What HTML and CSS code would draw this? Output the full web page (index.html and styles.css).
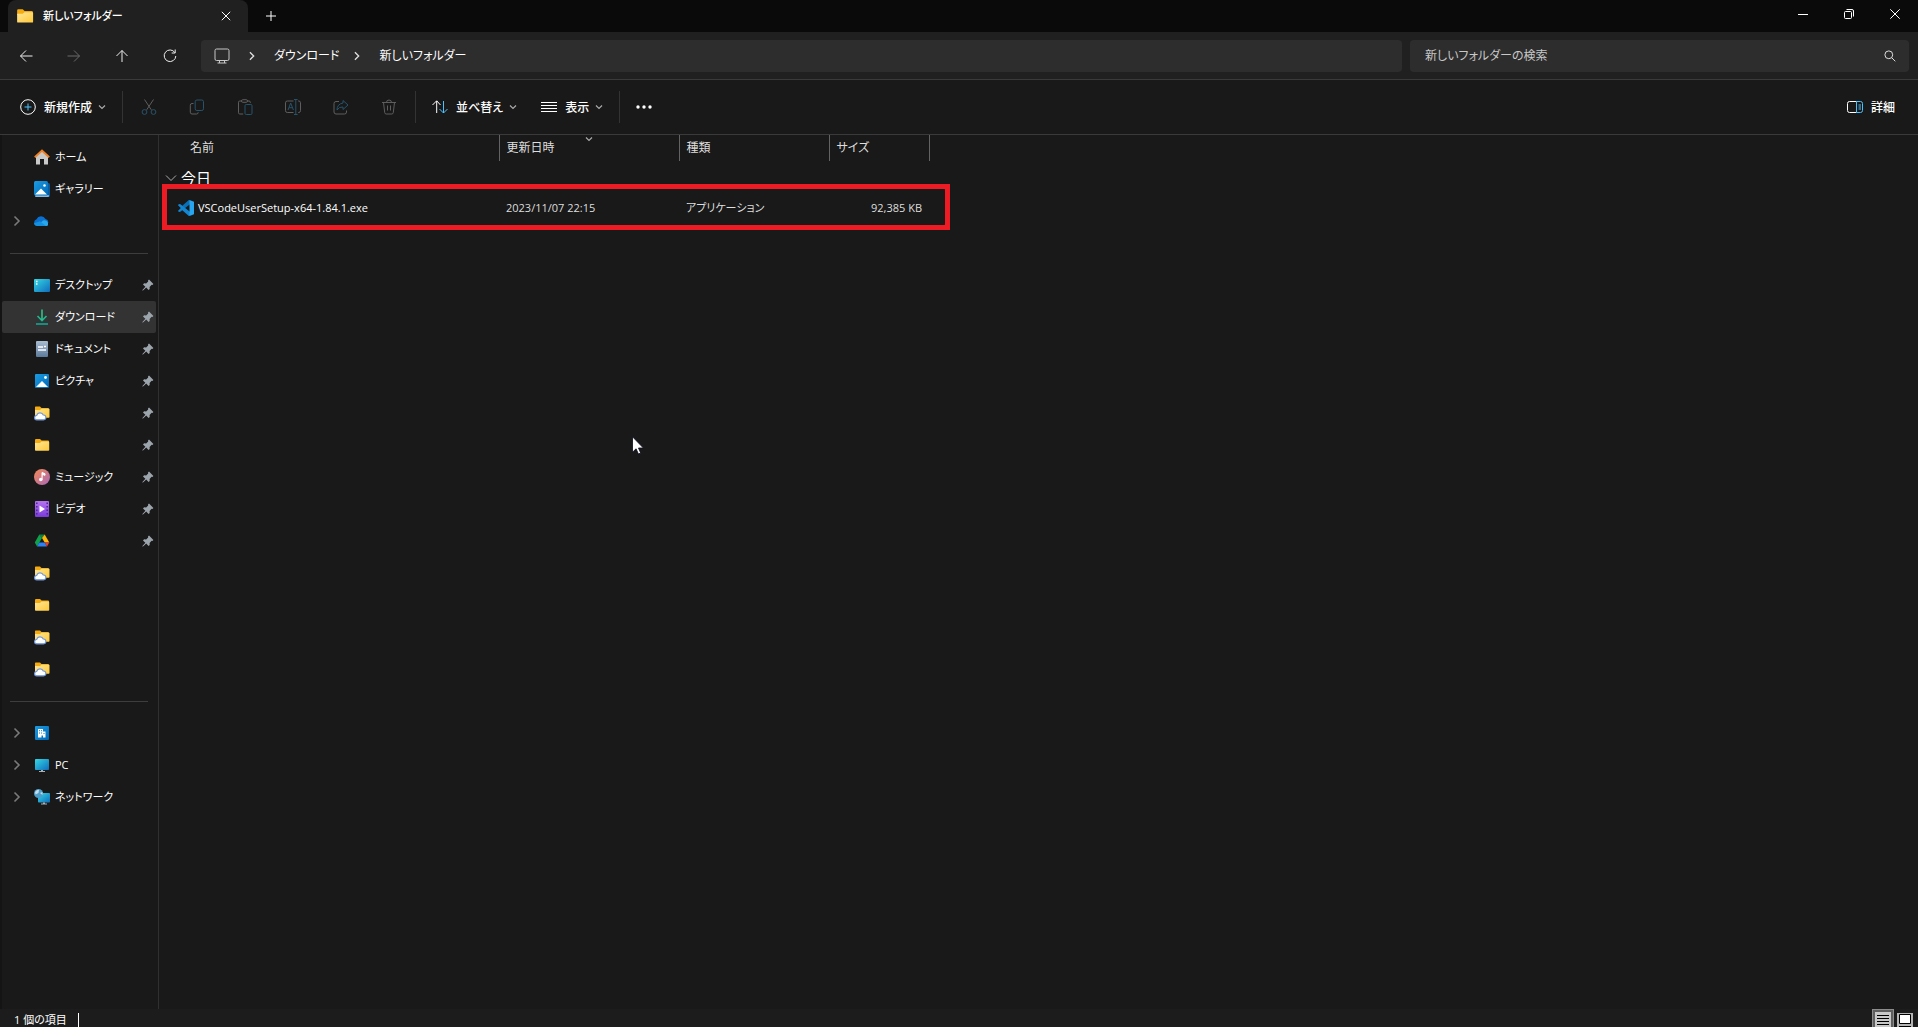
FILE: index.html
```html
<!DOCTYPE html>
<html lang="ja">
<head>
<meta charset="utf-8">
<meta name="viewport" content="width=device-width, initial-scale=1">
<title>新しいフォルダー</title>
<link rel="stylesheet" href="styles.css">
</head>
<body>
<svg class="defs" aria-hidden="true">
  <defs>
    <linearGradient id="g-folder" x1="0" y1="0" x2="1" y2="1"><stop offset="0" stop-color="#ffe69a"/><stop offset="1" stop-color="#ffc937"/></linearGradient>
    <linearGradient id="g-screen" x1="0" y1="0" x2="1" y2="1"><stop offset="0" stop-color="#34d8e4"/><stop offset="1" stop-color="#0f6cbd"/></linearGradient>
    <linearGradient id="g-blue" x1="0" y1="0" x2="1" y2="1"><stop offset="0" stop-color="#1b9de2"/><stop offset="1" stop-color="#0067b8"/></linearGradient>
    <linearGradient id="g-music" x1="0" y1="0" x2="1" y2="1"><stop offset="0" stop-color="#f58a55"/><stop offset="1" stop-color="#a868b8"/></linearGradient>
    <linearGradient id="g-video" x1="0" y1="0" x2="0" y2="1"><stop offset="0" stop-color="#b673f0"/><stop offset="1" stop-color="#7a3bdc"/></linearGradient>
    <linearGradient id="g-doc" x1="0" y1="0" x2="0" y2="1"><stop offset="0" stop-color="#a9bccf"/><stop offset="1" stop-color="#5d7b9b"/></linearGradient>
  </defs>
  <symbol id="i-folder" viewBox="0 0 16 16"><path d="M1 3.200q0-1.200 1-1.200h4l1.600 1.600H14q1 0 1 1V7H1z" fill="#f5ab10"/><path d="M1 6h5l1.600-1.400H14.500q.7 0 .7.7V13q0 .8-.8.8H1.800Q1 13.800 1 13z" fill="url(#g-folder)"/></symbol>
  <symbol id="i-cloudfolder" viewBox="0 0 16 16"><path d="M1 2.200q0-.7.7-.7H6L7.500 3H14q1 0 1 1v3H1z" fill="#f5ab10"/><path d="M1 5h5l1.500-1.300H15q.5 0 .5.6V12q0 .7-.7.7H1z" fill="url(#g-folder)"/><path d="M2.900 14.800a2.200 2.200 0 0 1-.2-4.400 3.500 3.500 0 0 1 6.600-.4 2.400 2.400 0 0 1 .3 4.800z" fill="#fff" stroke="#7399de" stroke-width="1.200"/></symbol>
  <symbol id="i-chev" viewBox="0 0 8 8"><path d="M1 2.500l3 3 3-3" fill="none" stroke="currentColor" stroke-width="1.200"/></symbol>
  <symbol id="i-next" viewBox="0 0 8 12"><path d="M1.500 1.500L6 6l-4.500 4.500" fill="none" stroke="currentColor" stroke-width="1.600"/></symbol>
  <symbol id="i-pin" viewBox="0 0 12 12"><path d="M7 .6l4.400 4.400-1 1-.8-.2-2 2.100.1 2-1.100 1.100-2.400-2.400L1 11.600H.4V11l3-3.200L1 5.400l1.100-1.100 2 .1 2.100-2L6 1.600z" fill="#9da5ac"/></symbol>
</svg>

<header class="titlebar">
  <div class="tab">
    <svg class="tab-folder"><use href="#i-folder"/></svg>
    <span class="tab-title">新しいフォルダー</span>
    <button class="tab-close" aria-label="タブを閉じる"><svg class="glyph" viewBox="0 0 10 10"><path d="M.8.8l8.400 8.400M9.200.8L.8 9.200"/></svg></button>
  </div>
  <button class="tab-new" aria-label="新しいタブ"><svg class="glyph" viewBox="0 0 10 10"><path d="M5 0v10M0 5h10"/></svg></button>
  <div class="window-controls">
    <button aria-label="最小化"><svg class="glyph" viewBox="0 0 10 10"><path d="M0 5.500h10"/></svg></button>
    <button aria-label="元に戻す"><svg class="glyph" viewBox="0 0 10 10"><rect x=".5" y="2.500" width="7" height="7" rx="1"/><path d="M2.500.5H8q1.500 0 1.500 1.500v5.500"/></svg></button>
    <button aria-label="閉じる"><svg class="glyph" viewBox="0 0 10 10"><path d="M.3.3l9.400 9.400M9.700.3L.3 9.700"/></svg></button>
  </div>
</header>

<div class="navbar">
  <button class="nav-btn" aria-label="戻る"><svg class="icon line" viewBox="0 0 16 16"><path d="M14.500 8H2.500M8 2.500L2.500 8 8 13.500"/></svg></button>
  <button class="nav-btn dim" aria-label="進む"><svg class="icon line" viewBox="0 0 16 16"><path d="M1.500 8h12M8 2.500L13.500 8 8 13.500"/></svg></button>
  <button class="nav-btn" aria-label="上へ"><svg class="icon line" viewBox="0 0 16 16"><path d="M8 14V2.500M2.500 8L8 2.500 13.500 8"/></svg></button>
  <button class="nav-btn" aria-label="最新の情報に更新"><svg class="icon line" viewBox="0 0 16 16"><path d="M12.800 4.500A5.800 5.800 0 1 0 13.800 8M13.200 1.500v3.500H9.700"/></svg></button>
  <nav class="address" aria-label="アドレス">
    <svg class="icon line" viewBox="0 0 16 16"><rect x="1" y="1" width="14" height="11.500" rx="1.500"/><path d="M5.500 12.500v2.500M10.500 12.500v2.500M3.500 15h9"/></svg>
    <svg class="next"><use href="#i-next"/></svg>
    <a class="crumb" href="#">ダウンロード</a>
    <svg class="next"><use href="#i-next"/></svg>
    <a class="crumb" href="#">新しいフォルダー</a>
  </nav>
  <label class="search">
    <input type="search" placeholder="新しいフォルダーの検索" aria-label="新しいフォルダーの検索">
    <svg class="glass" viewBox="0 0 12 12"><circle cx="4.800" cy="4.800" r="3.900"/><path d="M7.700 7.700l3.600 3.600"/></svg>
  </label>
</div>

<div class="toolbar" role="toolbar">
  <button class="tool"><svg class="icon line" viewBox="0 0 16 16"><circle cx="8" cy="8" r="7.300"/><path class="accent" d="M8 4.500v7M4.500 8h7"/></svg><span>新規作成</span><svg class="chev"><use href="#i-chev"/></svg></button>
  <span class="sep"></span>
  <button class="tool-icon" aria-label="切り取り"><svg class="icon line" viewBox="0 0 16 16"><path d="M3.500.5l6.800 10.300M12.500.5L5.700 10.800"/><g class="accent"><circle cx="3.500" cy="13" r="2.400"/><circle cx="12.500" cy="13" r="2.400"/></g></svg></button>
  <button class="tool-icon" aria-label="コピー"><svg class="icon line" viewBox="0 0 16 16"><path d="M4.500 4.500H3q-1.700 0-1.700 1.700v7Q1.300 15 3 15h4.500q1.700 0 1.700-1.700"/><rect class="accent" x="6.200" y="1" width="8.300" height="10.500" rx="1.700"/></svg></button>
  <button class="tool-icon" aria-label="貼り付け"><svg class="icon line" viewBox="0 0 16 16"><path d="M5 2H2.800Q1.500 2 1.500 3.200v10.600Q1.500 15 2.800 15h3.400M10 2h2q1.300 0 1.300 1.200v.8"/><rect x="4.500" y=".7" width="6" height="2.600" rx="1.300"/><rect class="accent" x="8" y="5.500" width="7" height="10" rx="1.200"/></svg></button>
  <button class="tool-icon" aria-label="名前の変更"><svg class="icon line" viewBox="0 0 16 16"><path d="M8.500 2H2.300Q.5 2 .5 3.800v7.900q0 1.800 1.800 1.800h6.200M13 2h.7q1.800 0 1.800 1.800v7.900q0 1.800-1.800 1.800H13"/><path class="accent" d="M10.800.7v14.500M9 .5h3.600M9 15.500h3.600M3 11l2.700-7 2.700 7M4 8.700h3.500"/></svg></button>
  <button class="tool-icon" aria-label="共有"><svg class="icon line" viewBox="0 0 16 16"><path d="M6 2.500H3Q1 2.500 1 4.500V13q0 2 2 2h8.500q2 0 2-2v-1.500"/><path class="accent" d="M10 1.500L15 6l-5 4.500V8Q6 7.500 4 11q0-6 6-7z"/></svg></button>
  <button class="tool-icon" aria-label="削除"><svg class="icon line" viewBox="0 0 16 16"><path d="M1 3.500h14M5.500 3.500Q5.500 1 8 1t2.500 2.500M2.500 3.500l1.200 10q.2 1.500 1.500 1.500h5.600q1.300 0 1.500-1.500l1.200-10M6.500 6.500v5M9.500 6.500v5"/></svg></button>
  <span class="sep"></span>
  <button class="tool"><svg class="icon line" viewBox="0 0 16 16"><path d="M4.700 14V2M.5 6l4.200-4.200L8.500 6"/><path class="accent" d="M11.500 2v12M7.500 10l4 4 4-4"/></svg><span>並べ替え</span><svg class="chev"><use href="#i-chev"/></svg></button>
  <button class="tool tool-view"><svg class="icon line" viewBox="0 0 16 16"><path d="M0 3.500h16M0 6.500h16M0 9.500h16M0 12.500h16"/></svg><span>表示</span><svg class="chev"><use href="#i-chev"/></svg></button>
  <span class="sep"></span>
  <button class="tool-icon more" aria-label="もっと見る"><svg class="icon" viewBox="0 0 16 16"><g fill="#fff"><circle cx="2" cy="8" r="1.700"/><circle cx="8" cy="8" r="1.700"/><circle cx="14" cy="8" r="1.700"/></g></svg></button>
  <button class="tool details"><svg class="icon line" viewBox="0 0 16 16"><path d="M9.500 2.500h-7Q.5 2.500.5 4.500v7q0 2 2 2h7"/><path class="accent" d="M9.500 2.500h4q2 0 2 2v7q0 2-2 2h-4zM11.500 6h2.500M11.500 8h2.500M11.500 10h2.500"/></svg><span>詳細</span></button>
</div>

<div class="body">
  <nav class="sidebar" aria-label="ナビゲーション">
    <ul>
      <li><a href="#"><span></span><svg class="icon" viewBox="0 0 16 16"><path d="M2 7l6-5.500L14 7v8.500h-4V10H6v5.500H2z" fill="#c9c9c9"/><path d="M.8 8.200L8 1.500l7.200 6.700" fill="none" stroke="#f08022" stroke-width="2"/></svg><span>ホーム</span></a></li>
      <li><a href="#"><span></span><svg class="icon" viewBox="0 0 16 16"><rect x="2" y="2" width="14" height="14" rx="1.500" fill="#0a5a9c"/><rect x="1" y="14" width="14" height="2" rx="1" fill="#8db9dc"/><rect width="14" height="14.500" rx="1.500" fill="url(#g-blue)"/><path d="M1 13.500l6-6 6 6z" fill="#fff"/><circle cx="10.500" cy="4.500" r="1.300" fill="#fff"/></svg><span>ギャラリー</span></a></li>
      <li><a href="#" aria-label="OneDrive"><svg class="next"><use href="#i-next"/></svg><svg class="icon" viewBox="0 0 16 16"><path d="M3.500 13A3.500 3.500 0 0 1 2.500 6.200 5 5 0 0 1 11.500 6a3.500 3.500 0 0 1 2.700 4z" fill="#0a6fce"/><path d="M3 13l6-5.500q3-1 5 2v2q0 1.500-1.500 1.500z" fill="#28a8ea"/><path d="M3.300 13Q.5 13 0 10.300l6-2 6 4.700z" fill="#1490df"/></svg></a></li>
      <li class="rule" role="separator"></li>
      <li><a href="#"><span></span><svg class="icon" viewBox="0 0 16 16"><rect y="2" width="16" height="13" rx="1" fill="url(#g-screen)"/><path d="M2 4.500h1.500M2 7h1.500" stroke="#fff" stroke-width="1.500"/></svg><span>デスクトップ</span><svg class="pin"><use href="#i-pin"/></svg></a></li>
      <li><a href="#" class="current" aria-current="page"><span></span><svg class="icon" viewBox="0 0 16 16"><path d="M3.500 7L8 11.500 12.500 7" fill="none" stroke="#1eb890" stroke-width="1.600"/><path d="M2 14.200h12v1.600H2z" fill="#12a594"/><path d="M7.200.5h1.600V11H7.200z" fill="#2fc389"/></svg><span>ダウンロード</span><svg class="pin"><use href="#i-pin"/></svg></a></li>
      <li><a href="#"><span></span><svg class="icon" viewBox="0 0 16 16"><rect x="2" width="12" height="16" rx="1" fill="url(#g-doc)"/><path d="M4 6h5M10 5.500h2M4 9h8" stroke="#fff" stroke-width="1.400"/></svg><span>ドキュメント</span><svg class="pin"><use href="#i-pin"/></svg></a></li>
      <li><a href="#"><span></span><svg class="icon" viewBox="0 0 16 16"><rect x="1" y="1" width="14" height="14" rx="1" fill="url(#g-blue)"/><path d="M2 14l6-6 6 6z" fill="#fff"/><circle cx="11.500" cy="4.500" r="1.400" fill="#fff"/></svg><span>ピクチャ</span><svg class="pin"><use href="#i-pin"/></svg></a></li>
      <li><a href="#" aria-label="クラウド フォルダー"><span></span><svg class="icon"><use href="#i-cloudfolder"/></svg><span></span><svg class="pin"><use href="#i-pin"/></svg></a></li>
      <li><a href="#" aria-label="フォルダー"><span></span><svg class="icon"><use href="#i-folder"/></svg><span></span><svg class="pin"><use href="#i-pin"/></svg></a></li>
      <li><a href="#"><span></span><svg class="icon" viewBox="0 0 16 16"><circle cx="8" cy="8" r="8" fill="url(#g-music)"/><circle cx="6.800" cy="10.500" r="1.800" fill="#fff"/><path d="M8 10.500V3.500l3 1.200v1.600L8.600 5.500" fill="#fff" stroke="#fff"/></svg><span>ミュージック</span><svg class="pin"><use href="#i-pin"/></svg></a></li>
      <li><a href="#"><span></span><svg class="icon" viewBox="0 0 16 16"><rect x="1" width="14" height="16" rx="1" fill="url(#g-video)"/><path d="M2.800 1.500v14M13.200 1.500v14" stroke="#4d2494" stroke-width="1.500" stroke-dasharray="1.500 2"/><path d="M5.500 4.500v7l5.500-3.500z" fill="#fff"/></svg><span>ビデオ</span><svg class="pin"><use href="#i-pin"/></svg></a></li>
      <li><a href="#" aria-label="Google ドライブ"><span></span><svg class="icon" viewBox="0 0 16 16"><path d="M5.300 1.500L.8 9.500 3 13.500 8 5z" fill="#11a04b"/><path d="M5.300 1.500h5.400L8 5.500z" fill="#0b8040"/><path d="M10.700 1.500L15.300 9.500h-4.600L8 5z" fill="#fbb90a"/><path d="M5.300 9.500h5.400l2.300 4H3z" fill="#2a80f4"/><path d="M10.700 9.500h4.600L13 13.500z" fill="#e53c30"/></svg><span></span><svg class="pin"><use href="#i-pin"/></svg></a></li>
      <li><a href="#" aria-label="クラウド フォルダー"><span></span><svg class="icon"><use href="#i-cloudfolder"/></svg></a></li>
      <li><a href="#" aria-label="フォルダー"><span></span><svg class="icon"><use href="#i-folder"/></svg></a></li>
      <li><a href="#" aria-label="クラウド フォルダー"><span></span><svg class="icon"><use href="#i-cloudfolder"/></svg></a></li>
      <li><a href="#" aria-label="クラウド フォルダー"><span></span><svg class="icon"><use href="#i-cloudfolder"/></svg></a></li>
      <li class="rule" role="separator"></li>
      <li><a href="#" aria-label="組織"><svg class="next"><use href="#i-next"/></svg><svg class="icon" viewBox="0 0 16 16"><rect x="1" y="1" width="14" height="14" rx="1" fill="url(#g-blue)"/><path d="M4 12.500V4h5v2.500h2.500v6H9v-2H7.500v2z" fill="#fff"/><path d="M5 5.700h1M7 5.700h1M5 8h1M7 8h1M9.500 8.500h1" stroke="#1680cc"/></svg></a></li>
      <li><a href="#"><svg class="next"><use href="#i-next"/></svg><svg class="icon" viewBox="0 0 16 16"><rect x="1" y="2" width="14" height="11" rx=".8" fill="url(#g-screen)"/><path d="M7 13h2v1h2v1H5v-1h2z" fill="#a9b0b6"/></svg><span>PC</span></a></li>
      <li><a href="#"><svg class="next"><use href="#i-next"/></svg><svg class="icon" viewBox="0 0 16 16"><rect x="4" y="4" width="12" height="9.500" rx=".8" fill="url(#g-screen)"/><path d="M9 13.500h2v1h2v1H7v-1h2z" fill="#a9b0b6"/><circle cx="4.500" cy="4.500" r="4.500" fill="#4f9cc9"/><path d="M1 3q2.500-3 4-2L4.500 4 1.500 5.500zM6 4l2.500-1v3z" fill="#c2dce9"/></svg><span>ネットワーク</span></a></li>
    </ul>
  </nav>

  <main class="content">
    <table class="files">
      <colgroup><col class="c-name"><col class="c-date"><col class="c-type"><col class="c-size"></colgroup>
      <thead>
        <tr><th scope="col" class="name">名前</th><th scope="col" class="sorted">更新日時<svg class="chev"><use href="#i-chev"/></svg></th><th scope="col">種類</th><th scope="col">サイズ</th></tr>
      </thead>
      <tbody>
        <tr class="group"><th colspan="4" scope="rowgroup"><span class="group-label"><svg viewBox="0 0 12 8"><path d="M1 1.500l5 5 5-5" fill="none" stroke="#aaa"/></svg>今日</span></th></tr>
        <tr class="file">
          <td><a class="file-name" href="#"><svg class="icon" viewBox="0 0 16 16"><path d="M0 5l1.300-1.100L4 6 10.800 0 12 .6v3.700L2 12.100 0 11l3-3z" fill="#0a6fb5"/><path d="M0 11l1.300 1.100L4 10l6.800 6 1.200-.6v-3.700L2 3.900 0 5l3 3z" fill="#1485cf"/><path d="M11.500 0L16 1.800v12.400L11.500 16z" fill="#27a5f0"/></svg>VSCodeUserSetup-x64-1.84.1.exe</a></td>
          <td>2023/11/07 22:15</td><td>アプリケーション</td><td class="size">92,385 KB</td>
        </tr>
      </tbody>
    </table>
    <div class="highlight"></div>
  </main>
</div>

<footer class="statusbar">
  <span class="count">1 個の項目</span>
  <div class="views">
    <button class="view active" aria-label="詳細表示"><svg viewBox="0 0 16 16"><path d="M0 0h16v16H0z" fill="#c8c8c8"/><path d="M2 3.500h12M2 6.500h12M2 9.500h12M2 12.500h12" stroke="#000"/></svg></button>
    <button class="view" aria-label="大きい縮小版"><svg viewBox="0 0 16 16"><path d="M0 0h16v16H0z" fill="#b5b5b5"/><path d="M2.500 1.500h11v9h-11z" fill="#fff" stroke="#000"/><path d="M2 13.500h12" stroke="#000"/></svg></button>
  </div>
</footer>

<svg class="cursor" viewBox="0 0 12 19" aria-hidden="true"><path d="M.5.800v15.400l3.600-3.400 2.300 5.200 2.300-1-2.200-5h4.900z" fill="#fff" stroke="#0a0a1c" stroke-width=".8"/></svg>
</body>
</html>
```
FILE: styles.css
```css
* { box-sizing: border-box; }

body {
  margin: 0;
  height: 100vh;
  display: flex;
  flex-direction: column;
  overflow: hidden;
  background: #191919;
  color: #fff;
  font: 12px/16px "Open Sans", "Noto Sans CJK JP", sans-serif;
  font-feature-settings: "palt";
}

button {
  display: flex;
  align-items: center;
  justify-content: center;
  padding: 0;
  border: 0;
  background: none;
  color: inherit;
  font: inherit;
  font-feature-settings: inherit;
}

a { color: inherit; text-decoration: none; }
svg { display: block; flex: none; }
.defs { position: absolute; width: 0; height: 0; }
.icon { width: 16px; height: 16px; }
.line { fill: none; stroke: currentColor; stroke-width: 1; }
.accent { stroke: #4cc2ff; }
.glyph { width: 10px; height: 10px; fill: none; stroke: #fff; }
.chev { width: 8px; height: 8px; color: #aaa; }
.next { width: 8px; height: 12px; color: #7a7a7a; }

/* Title bar */
.titlebar { display: flex; height: 32px; flex: none; background: #0a0a0a; }
.tab {
  display: flex;
  align-items: center;
  width: 240px;
  margin-left: 8px;
  padding: 0 17px 0 8px;
  border-radius: 8px 8px 0 0;
  background: #202020;
}
.tab-folder { width: 18px; height: 18px; margin-right: 9px; }
.tab-title { font-size: 11px; font-weight: 500; white-space: nowrap; }
.tab-close { margin-left: auto; }
.tab-new { width: 46px; }
.window-controls { display: flex; height: 28px; margin-left: auto; }
.window-controls button { width: 46px; }

/* Navigation row */
.navbar {
  display: flex;
  align-items: center;
  flex: none;
  height: 48px;
  padding: 0 9px 0 2px;
  border-bottom: 1px solid #3a3a3a;
  background: #202020;
}
.nav-btn { width: 48px; height: 32px; color: #eee; }
.dim { color: #6a6a6a; }
.address {
  display: flex;
  align-items: center;
  flex: 1 1 1201px;
  height: 32px;
  margin-left: 7px;
  padding: 0 13px;
  border-radius: 4px;
  background: #2d2d2d;
}
.address .icon { color: #c8c8c8; }
.address .next { height: 10px; margin: 0 18px; color: #e0e0e0; }
.address .crumb + .next { margin-left: 14px; }
.search {
  display: flex;
  align-items: center;
  flex: 1 1 499px;
  height: 32px;
  margin-left: 8px;
  padding: 0 13px 0 15px;
  border-radius: 4px;
  background: #2d2d2d;
}
.search input {
  flex: 1;
  min-width: 0;
  padding: 0;
  border: 0;
  outline: 0;
  background: none;
  color: #fff;
  font: inherit;
  font-feature-settings: inherit;
}
.search input::placeholder { color: #c8c8c8; opacity: 1; }
.glass { width: 12px; height: 12px; fill: none; stroke: #ddd; }

/* Command bar */
.toolbar {
  display: flex;
  align-items: center;
  flex: none;
  height: 55px;
  padding: 0 23px 0 20px;
  border-bottom: 1px solid #3a3a3a;
  font-weight: 500;
}
.tool { gap: 8px; }
.tool span { padding-top: 2px; }
.tool .chev { margin-left: -2px; }
.tool-view { margin-left: 24px; }
.sep { width: 1px; height: 32px; margin: 0 16px; background: #333; }
.tool-icon { width: 16px; margin: 0 16px; }
.sep + .tool-icon { margin-left: 2px; }
.tool-icon + .sep { margin-left: 2px; }
.tool-icon:not(.more) { color: #5e5e5e; }
.tool-icon .accent { stroke: #27536b; }
.sep + .more { margin-left: 0; }
.details { margin-left: auto; }

/* Navigation pane */
.body { display: flex; flex: 1; min-height: 0; }
.sidebar {
  flex: 0 0 159px;
  padding-top: 6px;
  border-right: 1px solid #303030;
  border-left: 2px solid #141414;
  overflow: hidden;
  font-size: 11px;
}
.sidebar ul { margin: 0; padding: 0; list-style: none; }
.sidebar a {
  display: grid;
  grid-template-columns: 8px 16px 1fr 12px;
  align-items: center;
  height: 32px;
  margin-right: 2px;
  padding: 0 2px 0 11px;
  white-space: nowrap;
}
.sidebar a .icon { margin-left: 13px; }
.sidebar a .icon + span { margin-left: 18px; }
.sidebar .current { border-radius: 2px; background: #333; }
.pin { width: 12px; height: 12px; }
.rule { display: flex; align-items: center; height: 32px; padding: 0 10px 0 8px; }
.rule::before { content: ""; flex: 1; height: 1px; background: #3d3d3d; }

/* File list */
.content { position: relative; flex: 1; min-width: 0; }
.files { table-layout: fixed; width: 770px; border-collapse: collapse; }
.c-name { width: 340px; }
.c-date { width: 180px; }
.c-type { width: 150px; }
.c-size { width: 100px; }
.files th, .files td { padding: 0 7px; text-align: left; font-weight: 400; white-space: nowrap; }
.files thead th { height: 26px; border-right: 1px solid #636363; color: #dedede; }
.files thead .name { padding-left: 31px; }
.sorted { position: relative; }
.sorted .chev { position: absolute; top: 0; left: 48%; }
.files .group th { height: 34px; padding-left: 6px; font-size: 15px; }
.group-label { display: flex; align-items: center; gap: 4px; }
.group-label svg { width: 12px; height: 8px; }
.file td { height: 26px; color: #dedede; font-size: 11px; }
.file .file-name { display: flex; align-items: center; gap: 4px; padding-left: 12px; color: #fff; }
.file .size { text-align: right; }
.highlight {
  position: absolute;
  top: 49px;
  left: 3px;
  width: 788px;
  height: 46px;
  border: 5px solid #ed1c24;
}

/* Status bar */
.statusbar {
  display: flex;
  justify-content: space-between;
  flex: none;
  height: 18px;
  padding: 0 5px 0 14px;
  overflow: hidden;
  background: #1c1c1c;
}
.count {
  height: 14px;
  margin-top: 4px;
  padding-right: 11px;
  border-right: 1px solid #fff;
  font-size: 11px;
  line-height: 14px;
}
.views { display: flex; gap: 3px; }
.view { width: 16px; height: 20px; align-items: flex-end; }
.view svg { width: 16px; height: 16px; }
.view.active { width: 22px; border: 1px solid #8c8c8c; background: #5f5f5f; }

.cursor { position: absolute; top: 436px; left: 632px; width: 12px; height: 19px; }
```
